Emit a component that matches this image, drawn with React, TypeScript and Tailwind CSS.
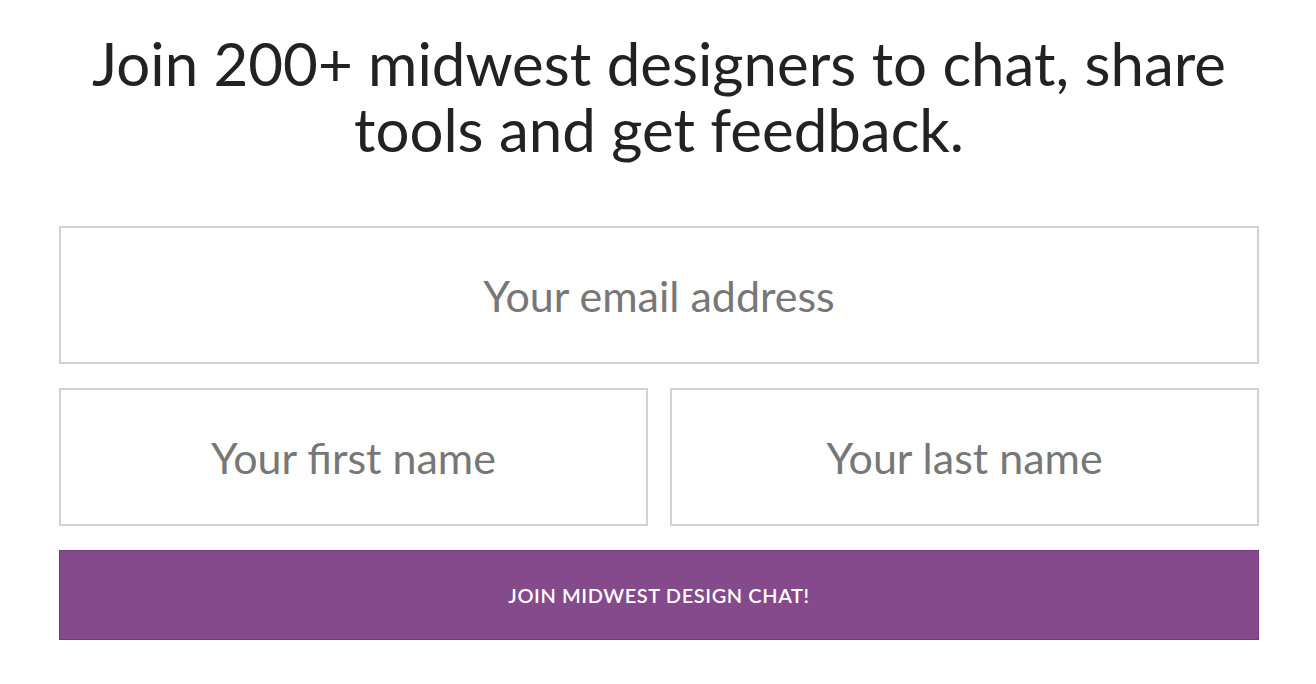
import React from 'react';

const font = { fontFamily: '"Lato", "Open Sans", sans-serif' };

export default function App() {
  return (
    <div className="min-h-screen bg-white pl-[59px] pr-[57px] pt-[30px]" style={font}>
      <h1 className="mx-auto max-w-[1180px] text-center text-[60px] leading-[66px] font-normal text-[#222222]">
        Join 200+ midwest designers to chat, share tools and get feedback.
      </h1>

      <form className="mt-[64px] flex flex-col gap-[24px]" onSubmit={(e) => e.preventDefault()}>
        <input
          type="email"
          placeholder="Your email address"
          className="h-[138px] w-full border-2 border-[#d2d2d2] bg-white text-center text-[43px] text-[#333] outline-none placeholder:text-[#777777]"
        />
        <div className="grid grid-cols-2 gap-[22px]">
          <input
            type="text"
            placeholder="Your first name"
            className="h-[138px] w-full border-2 border-[#d2d2d2] bg-white text-center text-[43px] text-[#333] outline-none placeholder:text-[#777777]"
          />
          <input
            type="text"
            placeholder="Your last name"
            className="h-[138px] w-full border-2 border-[#d2d2d2] bg-white text-center text-[43px] text-[#333] outline-none placeholder:text-[#777777]"
          />
        </div>
        <button
          type="submit"
          className="h-[90px] w-full border border-[#6f3a75] bg-[#844a8b] text-[20px] font-semibold tracking-[0.6px] text-white uppercase"
        >
          Join Midwest Design Chat!
        </button>
      </form>
    </div>
  );
}
